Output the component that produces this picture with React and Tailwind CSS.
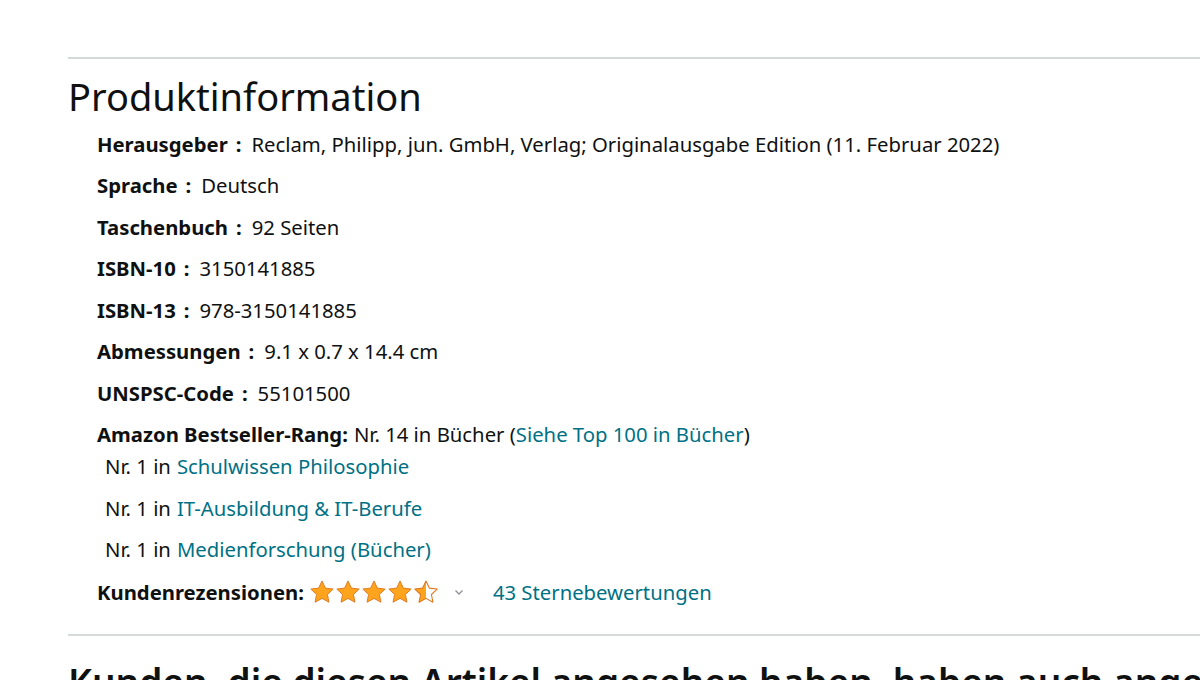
import React from "react";

const details = [
  ["Herausgeber", "Reclam, Philipp, jun. GmbH, Verlag; Originalausgabe Edition (11. Februar 2022)"],
  ["Sprache", "Deutsch"],
  ["Taschenbuch", "92 Seiten"],
  ["ISBN-10", "3150141885"],
  ["ISBN-13", "978-3150141885"],
  ["Abmessungen", "9.1 x 0.7 x 14.4 cm"],
  ["UNSPSC-Code", "55101500"],
];

const ranks = ["Schulwissen Philosophie", "IT-Ausbildung & IT-Berufe", "Medienforschung (Bücher)"];

function Star({ fill = "full" }) {
  const d = "M12 1.8l3.1 6.6 7.2.9-5.3 5 1.4 7.1L12 17.9l-6.4 3.5 1.4-7.1-5.3-5 7.2-.9z";
  return (
    <svg width="26" height="26" viewBox="0 0 24 24">
      <defs>
        <clipPath id="half">
          <rect x="0" y="0" width="12" height="24" />
        </clipPath>
      </defs>
      {fill === "full" && <path d={d} fill="#ffa41c" stroke="#de7921" strokeWidth="0.9" strokeLinejoin="round" />}
      {fill === "half" && (
        <>
          <path d={d} fill="#ffa41c" clipPath="url(#half)" />
          <path d={d} fill="none" stroke="#de7921" strokeWidth="1" strokeLinejoin="round" />
        </>
      )}
    </svg>
  );
}

export default function App() {
  return (
    <div className="min-h-screen bg-white text-[#0f1111] pl-[68px] pt-[57px] overflow-hidden" style={{ fontFamily: '"Noto Sans", "Open Sans", sans-serif' }}>
      <div className="h-[2px] bg-[#d5d9d9]" />
      <h2 className="text-[38px] leading-[48px] mt-[13px] whitespace-nowrap">Produktinformation</h2>

      <div className="mt-[3px] pl-[29px] text-[20.3px]">
        {details.map(([k, v]) => (
          <div key={k} className="h-[41.5px] flex items-center whitespace-nowrap">
            <span className="font-bold">{k}</span>
            <span className="font-bold ml-[8px] mr-[10px]">:</span>
            <span>{v}</span>
          </div>
        ))}

        <div className="h-[41.5px] flex items-center whitespace-nowrap">
          <span className="font-bold">Amazon Bestseller-Rang:</span>
          <span className="ml-[6px]">
            Nr. 14 in Bücher (<span className="text-[#007185]">Siehe Top 100 in Bücher</span>)
          </span>
        </div>
        <div className="-mt-[9.5px] pl-[8px]">
          {ranks.map((r) => (
            <div key={r} className="h-[41.5px] flex items-center whitespace-nowrap">
              Nr. 1 in <span className="text-[#007185] ml-[6px]">{r}</span>
            </div>
          ))}
        </div>

        <div className="h-[42px] mt-[1px] flex items-center whitespace-nowrap">
          <span className="font-bold mr-[5px]">Kundenrezensionen:</span>
          <div className="flex items-center">
            <Star />
            <Star />
            <Star />
            <Star />
            <Star fill="half" />
          </div>
          <svg width="12" height="12" viewBox="0 0 12 12" className="ml-[14px]">
            <path d="M2.5 4.5L6 8l3.5-3.5" fill="none" stroke="#8d9096" strokeWidth="1.3" />
          </svg>
          <span className="text-[#007185] ml-[28px]">43 Sternebewertungen</span>
        </div>
      </div>

      <div className="h-[2px] bg-[#d5d9d9] mt-[21px]" />
      <h2 className="text-[37px] leading-[48px] mt-[22px] whitespace-nowrap font-semibold">
        Kunden, die diesen Artikel angesehen haben, haben auch angesehen
      </h2>
    </div>
  );
}
